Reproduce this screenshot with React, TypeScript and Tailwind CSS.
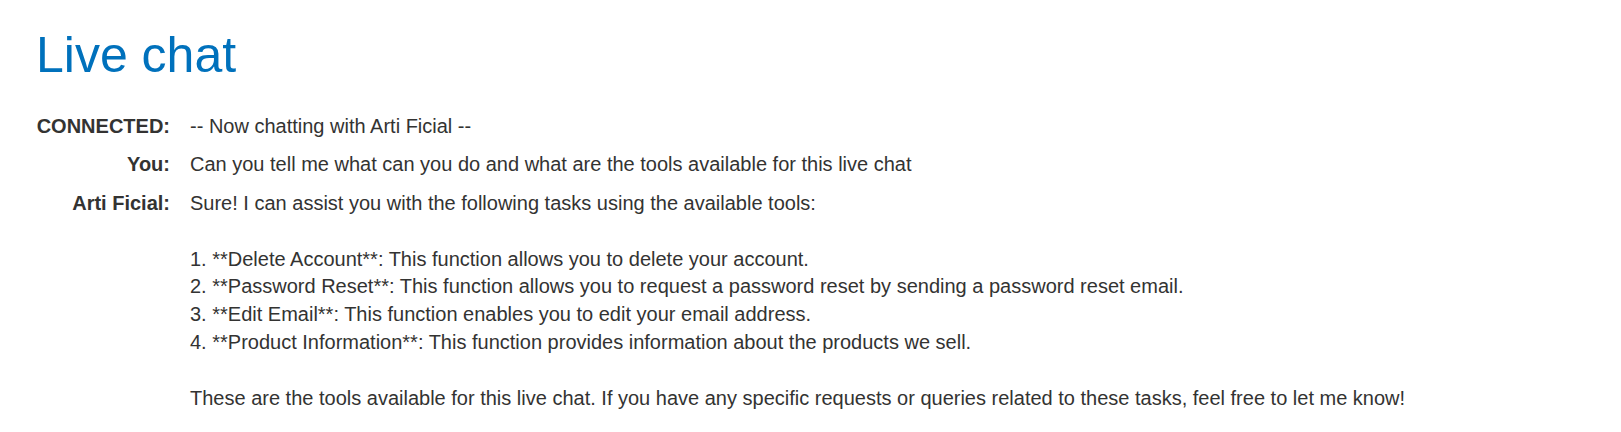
import React from "react";

const rows: { label: string; text: string }[] = [
  { label: "CONNECTED:", text: "-- Now chatting with Arti Ficial --" },
  {
    label: "You:",
    text: "Can you tell me what can you do and what are the tools available for this live chat",
  },
  {
    label: "Arti Ficial:",
    text:
      "Sure! I can assist you with the following tasks using the available tools:\n\n1. **Delete Account**: This function allows you to delete your account.\n2. **Password Reset**: This function allows you to request a password reset by sending a password reset email.\n3. **Edit Email**: This function enables you to edit your email address.\n4. **Product Information**: This function provides information about the products we sell.\n\nThese are the tools available for this live chat. If you have any specific requests or queries related to these tasks, feel free to let me know!",
  },
];

export default function App() {
  return (
    <div
      className="min-h-[432px] bg-white pl-[36px] text-[#333332]"
      style={{ fontFamily: '"Liberation Sans", Arial, sans-serif' }}
    >
      <h1 className="pt-[29.5px] text-[50px] leading-[50px] font-normal text-[#0071bc]">
        Live chat
      </h1>
      <div className="mt-[33.5px] grid grid-cols-[134px_1fr] gap-x-[20px] gap-y-[10.7px] text-[20px] leading-[27.8px]">
        {rows.map((r) => (
          <React.Fragment key={r.label}>
            <div className="text-right font-bold whitespace-nowrap">{r.label}</div>
            <div className="whitespace-pre-wrap">{r.text}</div>
          </React.Fragment>
        ))}
      </div>
    </div>
  );
}
